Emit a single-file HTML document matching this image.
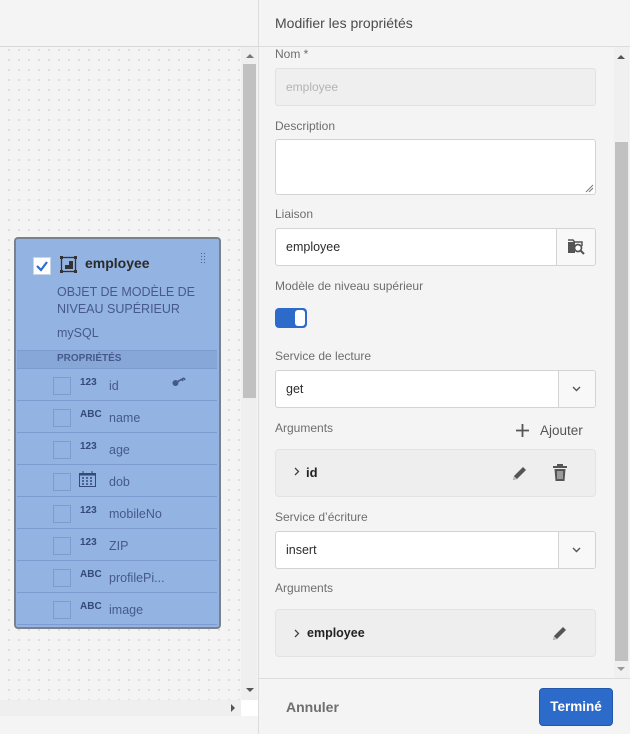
<!DOCTYPE html>
<html><head><meta charset="utf-8"><style>
*{box-sizing:border-box;margin:0;padding:0}
body{width:630px;height:734px;position:relative;overflow:hidden;background:#f4f4f4;font-family:"Liberation Sans",sans-serif}
.a{position:absolute}
.lbl{position:absolute;left:275px;font-size:12px;color:#6e6e6e}
.inp{position:absolute;left:275px;width:321px;background:#fff;border:1px solid #d3d3d3;border-radius:3px;font-size:12.5px;color:#2c2c2c;padding-left:10px}
.row{position:absolute;left:17px;width:200px;height:32px;border-bottom:1px solid #7d9bd0}
.row .cb{position:absolute;left:36px;top:8px;width:18px;height:18px;border:1px solid #7d9bd0}
.row .t{position:absolute;left:63px;top:8px;font-size:10px;font-weight:bold;color:#344a78}
.row .n{position:absolute;left:92px;top:10px;font-size:12.5px;color:#46598a}
.argbox{position:absolute;left:275px;width:321px;height:48px;background:#eeeeee;border:1px solid #e3e3e3;border-radius:4px}
</style></head><body>
<div class="a" style="left:0;top:46px;width:258px;height:1px;background:#d8d8d8"></div>
<div class="a" style="left:0;top:47px;width:241px;height:653px;background-image:radial-gradient(circle,#a9a9a9 0.7px,transparent 0.8px);background-size:10px 10px;background-position:4px -2px"></div>
<div class="a" style="left:241px;top:47px;width:16px;height:653px;background:#efefef"></div>
<div class="a" style="left:243px;top:64px;width:13px;height:334px;background:#c1c1c1"></div>
<div class="a" style="left:246px;top:54px;width:0;height:0;border-left:4px solid transparent;border-right:4px solid transparent;border-bottom:4px solid #777"></div>
<div class="a" style="left:246px;top:688px;width:0;height:0;border-left:4px solid transparent;border-right:4px solid transparent;border-top:4px solid #555"></div>
<div class="a" style="left:0;top:700px;width:241px;height:16px;background:#efefef"></div>
<div class="a" style="left:231px;top:704px;width:0;height:0;border-top:4px solid transparent;border-bottom:4px solid transparent;border-left:4px solid #555"></div>
<div class="a" style="left:241px;top:700px;width:17px;height:16px;background:#fff"></div>
<div class="a" style="left:258px;top:0;width:1px;height:734px;background:#dcdcdc"></div>

<div class="a" style="left:14px;top:237px;width:207px;height:392px;background:#93b3e3;border:2px solid #7b818c;border-radius:4px"></div>
<div class="a" style="left:33px;top:257px;width:18px;height:18px;background:#fff;border:1px solid #c8d4e8"></div>
<svg class="a" style="left:35px;top:259px" width="14" height="14"><path d="M2 7 L6 11 L12 3" stroke="#2d6bcb" stroke-width="2.2" fill="none"/></svg>
<svg class="a" style="left:60px;top:256px" width="17" height="17"><rect x="1.5" y="1.5" width="14" height="14" fill="none" stroke="#333" stroke-width="1.3"/><rect x="5" y="5" width="8" height="8" fill="#333"/><rect x="5" y="5" width="4" height="4" fill="#93b3e3"/><rect x="0" y="0" width="3" height="3" fill="#333"/><rect x="14" y="0" width="3" height="3" fill="#333"/><rect x="0" y="14" width="3" height="3" fill="#333"/><rect x="14" y="14" width="3" height="3" fill="#333"/></svg>
<div class="a" style="left:85px;top:255px;font-size:14px;font-weight:bold;color:#2a2a2a">employee</div>
<div class="a" style="left:200px;top:252px;width:5px;height:12px;background-image:radial-gradient(circle,#4f67a0 0.7px,transparent 0.8px);background-size:3px 3px"></div>
<div class="a" style="left:57px;top:284px;font-size:12.5px;line-height:17px;color:#46598a">OBJET DE MODÈLE DE<br>NIVEAU SUPÉRIEUR</div>
<div class="a" style="left:57px;top:326px;font-size:12.5px;color:#46598a">mySQL</div>
<div class="a" style="left:17px;top:350px;width:200px;height:19px;background:#88a7d9;border-top:1px solid #7d9bd0;border-bottom:1px solid #7d9bd0"></div>
<div class="a" style="left:57px;top:353px;font-size:10px;font-weight:bold;color:#46598a">PROPRIÉTÉS</div>

<div class="row" style="top:369px"><div class="cb"></div><div class="t">123</div><div class="n">id</div>
<svg class="a" style="left:155px;top:8px" width="14" height="10"><circle cx="3.5" cy="6" r="3" fill="#46598a"/><path d="M5 5 L12 1 M10 2 L11 4 M12 1 L13 3" stroke="#46598a" stroke-width="1.6"/></svg></div>
<div class="row" style="top:401px"><div class="cb"></div><div class="t">ABC</div><div class="n">name</div></div>
<div class="row" style="top:433px"><div class="cb"></div><div class="t">123</div><div class="n">age</div></div>
<div class="row" style="top:465px"><div class="cb"></div>
<svg class="a" style="left:62px;top:6px" width="18" height="17"><rect x="0.5" y="2.5" width="16" height="13" fill="none" stroke="#344a78"/><rect x="0.5" y="2.5" width="16" height="2" fill="#344a78"/><path d="M3 7h2M7 7h2M11 7h2M3 10h2M7 10h2M11 10h2M3 13h2M7 13h2M11 13h2" stroke="#344a78" stroke-width="1.6"/><path d="M4 0v3M13 0v3" stroke="#344a78"/></svg>
<div class="n">dob</div></div>
<div class="row" style="top:497px"><div class="cb"></div><div class="t">123</div><div class="n">mobileNo</div></div>
<div class="row" style="top:529px"><div class="cb"></div><div class="t">123</div><div class="n">ZIP</div></div>
<div class="row" style="top:561px"><div class="cb"></div><div class="t">ABC</div><div class="n">profilePi...</div></div>
<div class="row" style="top:593px"><div class="cb"></div><div class="t">ABC</div><div class="n">image</div></div>

<div class="a" style="left:275px;top:15px;font-size:14px;color:#4b4b4b">Modifier les propriétés</div>
<div class="a" style="left:259px;top:46px;width:371px;height:1px;background:#dcdcdc"></div>
<div class="lbl" style="top:47px">Nom *</div>
<div class="inp" style="top:68px;height:38px;background:#efefef;border-color:#e1e1e1;line-height:36px;color:#b3b3b3;font-size:12px">employee</div>
<div class="lbl" style="top:119px">Description</div>
<div class="inp" style="top:139px;height:56px"></div>
<svg class="a" style="left:585px;top:184px" width="9" height="9"><path d="M1 8L8 1M4 8L8 4" stroke="#777"/></svg>
<div class="lbl" style="top:207px">Liaison</div>
<div class="inp" style="top:228px;height:38px;line-height:36px">employee</div>
<div class="a" style="left:556px;top:229px;width:39px;height:36px;background:#f8f8f8;border-left:1px solid #d3d3d3;border-radius:0 3px 3px 0"></div>
<svg class="a" style="left:567px;top:238px" width="18" height="17"><path d="M1 2h5l1.5 2H15v4" fill="none" stroke="#555" stroke-width="1.5"/><rect x="1" y="4" width="7" height="11" fill="#555"/><circle cx="11" cy="10" r="3.5" fill="#fff" stroke="#555" stroke-width="1.7"/><path d="M13.5 12.5L17 16" stroke="#555" stroke-width="2"/></svg>
<div class="lbl" style="top:279px">Modèle de niveau supérieur</div>
<div class="a" style="left:275px;top:308px;width:32px;height:20px;background:#2d6bcb;border-radius:4px"></div>
<div class="a" style="left:295px;top:310px;width:10px;height:16px;background:#fff;border-radius:3px"></div>
<div class="lbl" style="top:349px">Service de lecture</div>
<div class="inp" style="top:370px;height:38px;line-height:36px">get</div>
<div class="a" style="left:558px;top:371px;width:37px;height:36px;background:#f8f8f8;border-left:1px solid #d3d3d3;border-radius:0 3px 3px 0"></div>
<svg class="a" style="left:572px;top:386px" width="9" height="6"><path d="M1 1l3.5 3.5L8 1" stroke="#555" stroke-width="1.4" fill="none"/></svg>
<div class="lbl" style="top:421px">Arguments</div>
<svg class="a" style="left:516px;top:424px" width="13" height="13"><path d="M6.5 0v13M0 6.5h13" stroke="#555" stroke-width="1.8"/></svg>
<div class="a" style="left:540px;top:423px;font-size:13.5px;color:#555">Ajouter</div>
<div class="argbox" style="top:449px"></div>
<svg class="a" style="left:294px;top:467px" width="6" height="9"><path d="M1 1l3.5 3.5L1 8" stroke="#444" stroke-width="1.3" fill="none"/></svg>
<div class="a" style="left:306px;top:465px;font-size:13px;font-weight:bold;color:#222">id</div>
<svg class="a" style="left:511px;top:465px" width="17" height="17"><path d="M2 15l1-4L12 2l3 3-9 9z" fill="#555"/><path d="M2 15l1-4 3 3z" fill="#bbb"/></svg>
<svg class="a" style="left:552px;top:464px" width="16" height="18"><rect x="1" y="2" width="14" height="2" fill="#555"/><rect x="5" y="0" width="6" height="2" fill="#555"/><path d="M2.5 5h11l-1 12h-9z" fill="#555"/><path d="M6 7v8M8 7v8M10 7v8" stroke="#eee" stroke-width="0.9"/></svg>
<div class="lbl" style="top:510px">Service d’écriture</div>
<div class="inp" style="top:531px;height:38px;line-height:36px">insert</div>
<div class="a" style="left:558px;top:532px;width:37px;height:36px;background:#f8f8f8;border-left:1px solid #d3d3d3;border-radius:0 3px 3px 0"></div>
<svg class="a" style="left:572px;top:547px" width="9" height="6"><path d="M1 1l3.5 3.5L8 1" stroke="#555" stroke-width="1.4" fill="none"/></svg>
<div class="lbl" style="top:581px">Arguments</div>
<div class="argbox" style="top:609px"></div>
<svg class="a" style="left:294px;top:629px" width="6" height="9"><path d="M1 1l3.5 3.5L1 8" stroke="#444" stroke-width="1.3" fill="none"/></svg>
<div class="a" style="left:307px;top:626px;font-size:12.5px;font-weight:bold;color:#222">employee</div>
<svg class="a" style="left:551px;top:625px" width="17" height="17"><path d="M2 15l1-4L12 2l3 3-9 9z" fill="#555"/><path d="M2 15l1-4 3 3z" fill="#bbb"/></svg>

<div class="a" style="left:614px;top:47px;width:15px;height:631px;background:#f0f0f0"></div>
<div class="a" style="left:615px;top:142px;width:13px;height:519px;background:#c1c1c1"></div>
<div class="a" style="left:617px;top:55px;width:0;height:0;border-left:4px solid transparent;border-right:4px solid transparent;border-bottom:4px solid #555"></div>
<div class="a" style="left:617px;top:667px;width:0;height:0;border-left:4px solid transparent;border-right:4px solid transparent;border-top:4px solid #999"></div>
<div class="a" style="left:259px;top:678px;width:371px;height:1px;background:#dcdcdc"></div>
<div class="a" style="left:286px;top:699px;font-size:14px;font-weight:bold;color:#6e6e6e">Annuler</div>
<div class="a" style="left:539px;top:688px;width:74px;height:38px;background:#2d6bcb;border:1px solid #2258ab;border-radius:4px;color:#fff;font-size:13.5px;font-weight:bold;text-align:center;line-height:36px">Terminé</div>
</body></html>
